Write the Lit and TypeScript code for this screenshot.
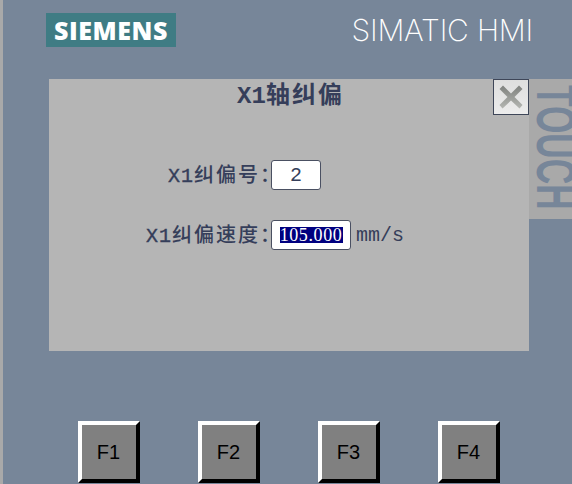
import { LitElement, html, css } from "lit";
import { customElement } from "lit/decorators.js";

@customElement("app-root")
export class AppRoot extends LitElement {
  static styles = css`
    :host { display: block; width: 572px; height: 484px; overflow: hidden; }
    .page { box-sizing: border-box; width: 572px; height: 484px; background: #778699; border-left: 3px solid #a9a9a9; display: flex; flex-direction: column; overflow: hidden; }
    .top { display: flex; justify-content: space-between; align-items: flex-start; height: 76px; padding: 13px 39px 0 43px; box-sizing: border-box; }
    .logo { width: 130px; height: 34px; background: #3f7c84; color: #fff; font: 800 25px "Open Sans", sans-serif; letter-spacing: 0.6px; display: flex; align-items: center; justify-content: center; }
    .brand { color: #fff; font: 200 30px Inter, sans-serif; letter-spacing: -0.2px; line-height: 34px; white-space: nowrap; }
    .mid { display: flex; align-items: flex-start; padding-left: 46px; height: 342px; padding-top: 3px; box-sizing: border-box; }
    .dialog { position: relative; width: 480px; height: 272px; background: #b5b5b5; color: #353e5a; font-family: "Noto Sans CJK SC", sans-serif; }
    .title { box-sizing: border-box; height: 30px; overflow: visible; text-align: center; font-size: 24px; font-weight: 700; line-height: 28px; letter-spacing: 2px; padding-left: 3px; white-space: nowrap; }
    .lat { font-family: "Liberation Mono", monospace; letter-spacing: 0; }
    .label .lat { letter-spacing: 1px; font-weight: 400; -webkit-text-stroke: 0.4px #353e5a; }
    .close { position: absolute; top: 0; right: 0; box-sizing: border-box; width: 36px; height: 36px; border: 1px solid #3e4658; background: linear-gradient(#dedede, #ececec); display: flex; align-items: center; justify-content: center; }
    .form { display: grid; grid-template-columns: 222px auto auto; grid-auto-rows: 30px; row-gap: 30px; align-items: center; justify-content: start; margin-top: 51px; }
    .label { height: 30px; text-align: right; font-size: 20px; font-weight: 500; line-height: 28px; letter-spacing: 2px; white-space: nowrap; margin-right: -11px; }
    .field { box-sizing: border-box; height: 30px; background: #fff; border: 1px solid #4a5062; border-radius: 3px; display: flex; align-items: center; justify-content: center; font: 20px "Liberation Mono", monospace; }
    .f1 { width: 50px; }
    .f2 { width: 80px; }
    .sel { box-sizing: border-box; width: 63px; height: 16px; background: #00007f; color: #fff; font: 18px/16px "Liberation Serif", serif; letter-spacing: 0.6px; text-align: center; white-space: nowrap; }
    .unit { font: 20px "Liberation Mono", monospace; padding-left: 5px; }
    .touch { width: 43px; height: 140px; background: #a9a9a9; overflow: hidden; color: #778699; }
    .touch span { display: block; writing-mode: vertical-rl; font: bold 56px/56px "Liberation Sans", sans-serif; white-space: nowrap; margin-top: 6px; margin-left: -25px; width: 80px; transform-origin: top left; transform: scaleY(0.63); }
    .keys { display: flex; gap: 58px; padding: 3px 0 0 75px; }
    .key { box-sizing: border-box; width: 62px; height: 62px; padding-right: 1px; background: #808080; border: 4px solid; border-color: #fff #000 #000 #fff; display: flex; align-items: center; justify-content: center; font: 20px "Liberation Sans", sans-serif; color: #000; }
  `;

  render() {
    return html`
      <div class="page">
        <div class="top">
          <div class="logo">SIEMENS</div>
          <div class="brand">SIMATIC HMI</div>
        </div>
        <div class="mid">
          <div class="dialog">
            <div class="title"><span class="lat">X1</span>轴纠偏</div>
            <div class="close">
              <svg width="28" height="28" viewBox="0 0 28 28">
                <defs>
                  <linearGradient id="xg" x1="0" y1="0" x2="0" y2="1">
                    <stop offset="0" stop-color="#7f817e"></stop>
                    <stop offset="1" stop-color="#b4b6b2"></stop>
                  </linearGradient>
                </defs>
                <path d="M6 2.5 L14 10.5 L22 2.5 L25.5 6 L17.5 14 L25.5 22 L22.5 25.5 L14 17.5 L5.5 25.5 L2.5 22 L10.5 14 L2.5 6 Z" fill="url(#xg)"></path>
              </svg>
            </div>
            <div class="form">
              <div class="label"><span class="lat">X1</span>纠偏号：</div>
              <div class="field f1">2</div>
              <div></div>
              <div class="label"><span class="lat">X1</span>纠偏速度：</div>
              <div class="field f2"><span class="sel">105.000</span></div>
              <div class="unit">mm/s</div>
            </div>
          </div>
          <div class="touch"><span>TOUCH</span></div>
        </div>
        <div class="keys">
          <div class="key">F1</div>
          <div class="key">F2</div>
          <div class="key">F3</div>
          <div class="key">F4</div>
        </div>
      </div>
    `;
  }
}
